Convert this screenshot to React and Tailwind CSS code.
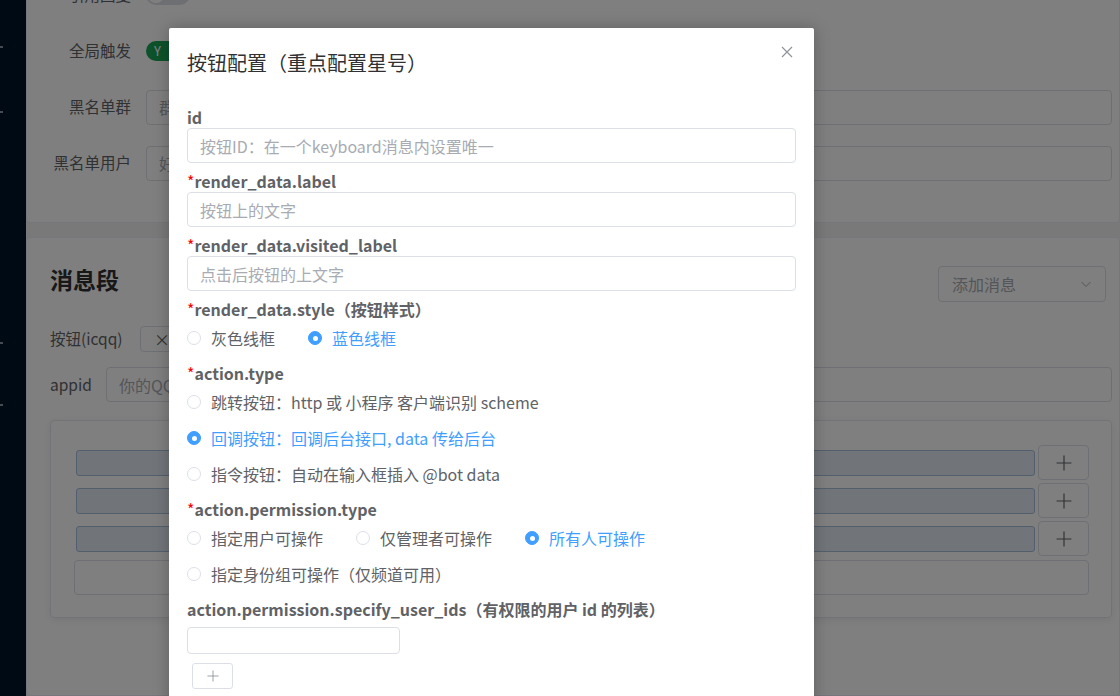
import React from "react";

function Radio({ label, checked }) {
  return (
    <div className="flex items-center h-9 mr-[33px]">
      {checked ? (
        <span className="w-[14px] h-[14px] rounded-full bg-[#409eff] border border-[#409eff] flex items-center justify-center">
          <span className="w-[5px] h-[5px] rounded-full bg-white" />
        </span>
      ) : (
        <span className="w-[14px] h-[14px] rounded-full border border-[#dcdfe6] bg-white" />
      )}
      <span className={checked ? "ml-[10px] text-[16px] text-[#409eff]" : "ml-[10px] text-[16px] text-[#606266]"}>{label}</span>
    </div>
  );
}

function FieldLabel({ required, children }) {
  return (
    <div className="h-[22px] leading-[22px] text-[16px] font-bold text-[#606266] whitespace-nowrap">
      {required && <span className="text-[#f00] font-normal">*</span>}
      {children}
    </div>
  );
}

function TextInput({ placeholder, className = "" }) {
  return (
    <input
      readOnly
      placeholder={placeholder}
      className={"block w-full h-[35px] border border-[#dcdfe6] rounded-[4px] px-3 text-[16px] outline-none bg-white placeholder:text-[#a8abb2] " + className}
    />
  );
}

function Plus({ size = 14, color = "#606266" }) {
  return (
    <svg width={size} height={size} viewBox="0 0 14 14" fill="none">
      <path d="M7 0.5v13M0.5 7h13" stroke={color} strokeWidth="1" />
    </svg>
  );
}

export default function App() {
  return (
    <div className="relative w-[1120px] h-[696px] overflow-hidden flex bg-[#f2f3f5] font-['Noto_Sans_CJK_SC',sans-serif]">
      {/* sidebar */}
      <div className="w-[26px] shrink-0 bg-[#001529] flex flex-col">
        <div className="mt-[46px] w-[3px] h-[2px] bg-[#8a96a3]" />
        <div className="mt-[63px] w-[3px] h-[2px] bg-[#8a96a3]" />
        <div className="mt-[229px] w-[3px] h-[2px] bg-[#8a96a3]" />
        <div className="mt-[60px] w-[3px] h-[2px] bg-[#8a96a3]" />
      </div>

      {/* main */}
      <div className="flex-1 min-w-0 flex flex-col">
        <div className="-mt-[32px] bg-white border border-[#ebeef5] rounded-[4px] pt-2 pb-[41px] flex flex-col gap-5">
          <div className="flex items-center h-9">
            <div className="w-[104px] text-right text-[15.5px] text-[#606266]">引用回复</div>
            <div className="ml-[15px] w-[44px] h-5 rounded-full bg-[#dcdfe6] flex items-center px-[2px]">
              <span className="w-4 h-4 rounded-full bg-white" />
            </div>
          </div>
          <div className="flex items-center h-9">
            <div className="w-[104px] text-right text-[15.5px] text-[#606266]">全局触发</div>
            <div className="ml-[15px] w-[48px] h-5 rounded-full bg-[#1aa457] flex items-center pl-[8px] text-[13px] text-white">Y</div>
          </div>
          <div className="flex items-center h-9">
            <div className="w-[104px] text-right text-[15.5px] text-[#606266]">黑名单群</div>
            <div className="ml-[15px] flex-1 mr-[7px]">
              <TextInput placeholder="群号，多个用逗号分隔" />
            </div>
          </div>
          <div className="flex items-center h-9">
            <div className="w-[104px] text-right text-[15.5px] text-[#606266]">黑名单用户</div>
            <div className="ml-[15px] flex-1 mr-[7px]">
              <TextInput placeholder="好友QQ号，多个用逗号分隔" />
            </div>
          </div>
        </div>

        <div className="mt-[14px] bg-white border border-[#ebeef5] rounded-[4px] pl-[23px] pr-[7px] pt-[28px] flex-1">
          <div className="flex items-start justify-between h-9">
            <div className="leading-[26px] text-[23px] font-bold text-[#303133]">消息段</div>
            <div className="mr-[6px] w-[168px] h-9 border border-[#dcdfe6] rounded-[4px] px-[13px] flex items-center justify-between text-[16px] text-[#a8abb2]">
              <span>添加消息</span>
              <svg width="12" height="12" viewBox="0 0 12 12" fill="none">
                <path d="M1.5 4l4.5 4.5L10.5 4" stroke="#a8abb2" strokeWidth="1" />
              </svg>
            </div>
          </div>

          <div className="mt-6 flex items-center h-[26px]">
            <div className="w-[90px] text-[15.5px] text-[#606266]">按钮(icqq)</div>
            <div className="w-[64px] h-[26px] border border-[#dcdfe6] rounded-[4px] bg-white flex items-center pl-[13px] text-[16px] text-[#606266]">×</div>
          </div>

          <div className="mt-[15px] flex items-center h-[35px]">
            <div className="w-[56px] text-[15.5px] text-[#606266]">appid</div>
            <div className="flex-1">
              <TextInput placeholder="你的QQ机器人appid" />
            </div>
          </div>

          <div className="mt-[18px] h-[198px] border border-[#e4e7ed] rounded-[4px] shadow-[0_2px_8px_rgba(0,0,0,0.08)] pl-[23px] pr-[22px] pt-[24px] flex flex-col gap-[3px]">
            {[0, 1, 2].map((i) => (
              <div key={i} className="flex items-center h-[35px]">
                <div className="ml-[2px] flex-1 h-[26px] rounded-[3px] border border-[#a6bfdd] bg-[#e3e9f2]" />
                <div className="ml-[3px] w-[51px] h-[35px] border border-[#dcdfe6] rounded-[4px] bg-white flex items-center justify-center">
                  <Plus size={16} />
                </div>
              </div>
            ))}
            <div className="mt-[1px] h-[35px] border border-[#dcdfe6] rounded-[4px]" />
          </div>
        </div>
      </div>

      {/* mask */}
      <div className="absolute inset-0 bg-black/50" />

      {/* dialog */}
      <div className="absolute left-[169px] top-[28px] w-[645px] h-[700px] bg-white rounded-t-[2px] shadow-[0_0_16px_rgba(0,0,0,0.25)]">
        <div className="pt-5 px-[18px] h-[50px]">
          <div className="h-[30px] leading-[30px] text-[20px] text-[#303133]">按钮配置（重点配置星号）</div>
        </div>
        <button className="absolute top-[18px] right-[21px] w-3 h-3">
          <svg width="12" height="12" viewBox="0 0 12 12" fill="none">
            <path d="M1 1l10 10M11 1L1 11" stroke="#909399" strokeWidth="1.2" />
          </svg>
        </button>

        <div className="px-[18px] pt-[28px]">
          <FieldLabel>id</FieldLabel>
          <TextInput placeholder="按钮ID：在一个keyboard消息内设置唯一" />

          <div className="mt-[7px]">
            <FieldLabel required>render_data.label</FieldLabel>
            <TextInput placeholder="按钮上的文字" />
          </div>

          <div className="mt-[7px]">
            <FieldLabel required>render_data.visited_label</FieldLabel>
            <TextInput placeholder="点击后按钮的上文字" />
          </div>

          <div className="mt-[7px]">
            <FieldLabel required>render_data.style（按钮样式）</FieldLabel>
            <div className="flex flex-wrap mb-[6px]">
              <Radio label="灰色线框" />
              <Radio label="蓝色线框" checked />
            </div>
          </div>

          <FieldLabel required>action.type</FieldLabel>
          <div className="flex flex-col mb-[6px]">
            <Radio label="跳转按钮：http 或 小程序 客户端识别 scheme" />
            <Radio label="回调按钮：回调后台接口, data 传给后台" checked />
            <Radio label="指令按钮：自动在输入框插入 @bot data" />
          </div>

          <FieldLabel required>action.permission.type</FieldLabel>
          <div className="flex flex-wrap mb-[6px]">
            <Radio label="指定用户可操作" />
            <Radio label="仅管理者可操作" />
            <Radio label="所有人可操作" checked />
            <Radio label="指定身份组可操作（仅频道可用）" />
          </div>

          <FieldLabel>action.permission.specify_user_ids（有权限的用户 id 的列表）</FieldLabel>
          <input
            readOnly
            className="mt-[7px] block w-[213px] h-[27px] border border-[#dcdfe6] rounded-[4px] px-3 outline-none"
          />
          <div className="mt-[9px] ml-[5px] w-[41px] h-[26px] border border-[#dcdfe6] rounded-[3px] flex items-center justify-center">
            <Plus size={12} color="#909399" />
          </div>
        </div>
      </div>
    </div>
  );
}
